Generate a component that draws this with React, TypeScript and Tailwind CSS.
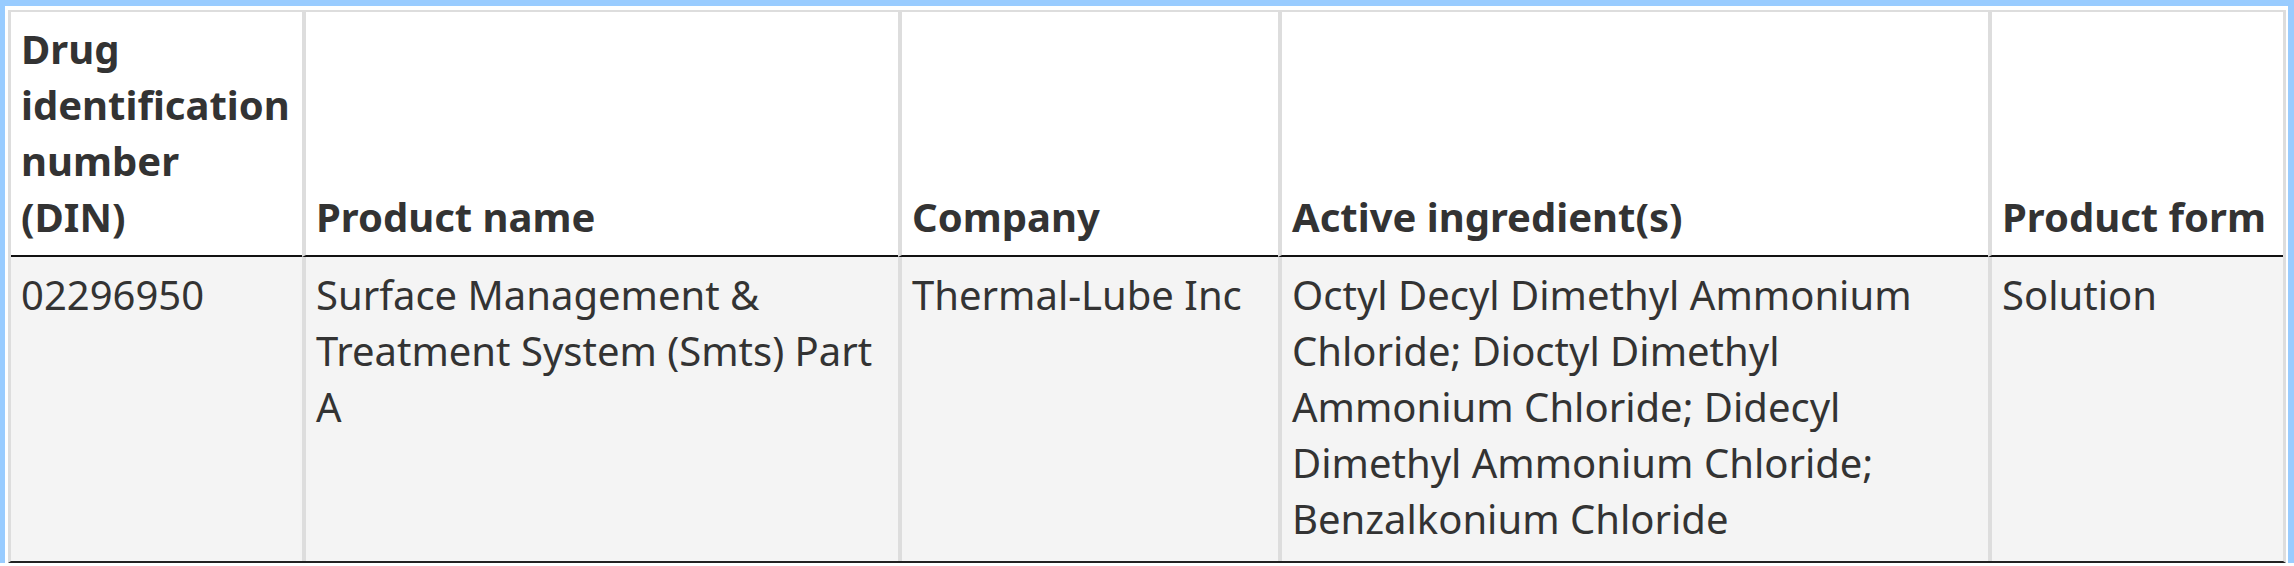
const headers = [
  { label: "Drug identification number (DIN)", width: "w-[291px]" },
  { label: "Product name", width: "w-[596px]" },
  { label: "Company", width: "w-[380px]" },
  { label: "Active ingredient(s)", width: "w-[710px]" },
  { label: "Product form", width: "" },
];

const row = [
  "02296950",
  "Surface Management & Treatment System (Smts) Part A",
  "Thermal-Lube Inc",
  "Octyl Decyl Dimethyl Ammonium Chloride; Dioctyl Dimethyl Ammonium Chloride; Didecyl Dimethyl Ammonium Chloride; Benzalkonium Chloride",
  "Solution",
];

export default function App() {
  return (
    <div className="min-h-[566px] bg-white font-['Noto_Sans',sans-serif] text-[#333]">
      <div className="border-t-[6px] border-l-[5px] border-r-[6px] border-[#9cf] pt-[4px] pl-[3px] pr-[2px]">
        <table className="w-full table-fixed border-separate border-spacing-0 border-t-2 border-x-[3px] border-b-2 border-t-[#ddd] border-x-[#ddd] border-b-[#222] text-[40px] leading-[56px]">
          <thead>
            <tr>
              {headers.map((h, i) => (
                <th
                  key={h.label}
                  className={`${h.width} ${i > 0 ? "border-l-[4px] border-l-[#ddd]" : ""} border-b-2 border-b-[#111] bg-white px-[10px] pt-[9px] pb-[10px] text-left align-bottom font-bold`}
                >
                  {h.label}
                </th>
              ))}
            </tr>
          </thead>
          <tbody>
            <tr>
              {row.map((cell, i) => (
                <td
                  key={i}
                  className={`${i > 0 ? "border-l-[4px] border-l-[#ddd]" : ""} bg-[#f4f4f4] px-[10px] pt-[10px] pb-[14px] align-top`}
                >
                  {cell}
                </td>
              ))}
            </tr>
          </tbody>
        </table>
      </div>
    </div>
  );
}
